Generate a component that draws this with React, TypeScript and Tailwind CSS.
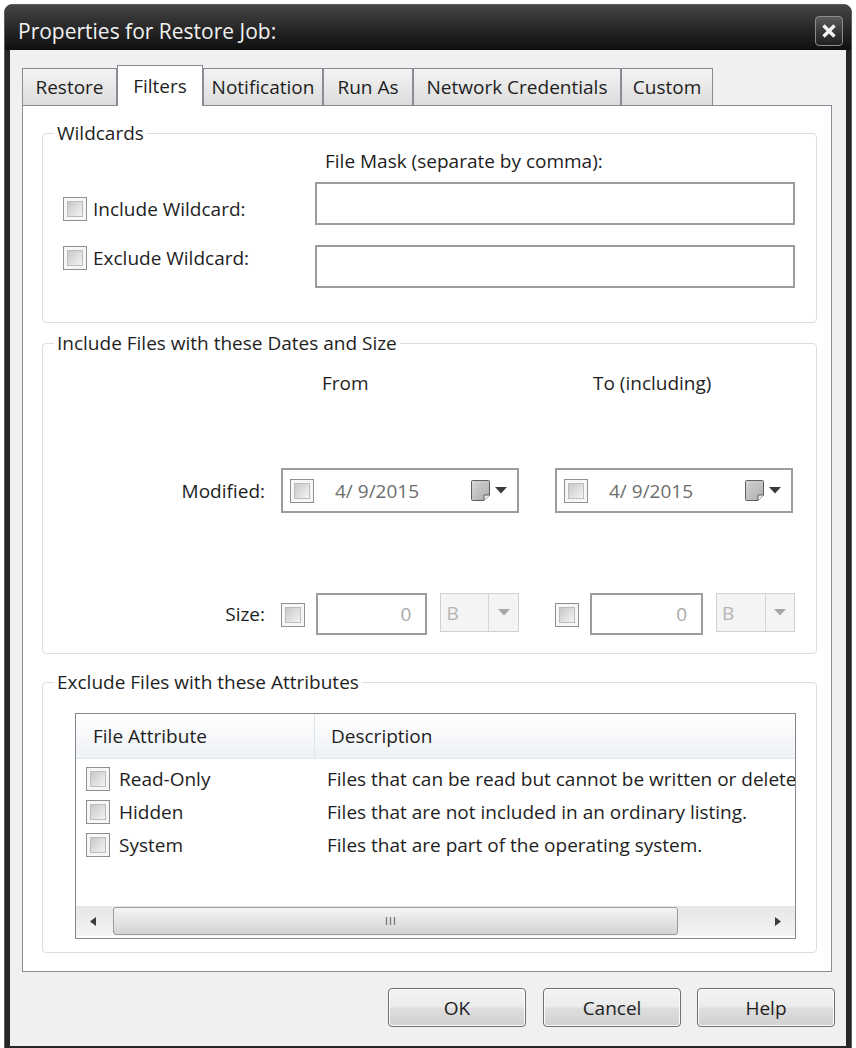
import { FC, ReactNode } from 'react';

const tabs = [
  { label: 'Restore', width: 'w-[95px]' },
  { label: 'Filters', width: 'w-[86px]', active: true },
  { label: 'Notification', width: 'w-[120px]' },
  { label: 'Run As', width: 'w-[90px]' },
  { label: 'Network Credentials', width: 'w-[208px]' },
  { label: 'Custom', width: 'w-[92px]' },
];

const attributes = [
  {
    name: 'Read-Only',
    description: 'Files that can be read but cannot be written or deleted.',
  },
  {
    name: 'Hidden',
    description: 'Files that are not included in an ordinary listing.',
  },
  {
    name: 'System',
    description: 'Files that are part of the operating system.',
  },
];

const CheckBox: FC<{ className?: string }> = ({ className = '' }) => (
  <div
    className={`w-[24px] h-[24px] shrink-0 border border-[#8f8f8f] bg-[#f7f7f7] p-[3px] ${className}`}
  >
    <div className="w-full h-full border border-[#bcbcbc] bg-linear-to-br from-[#c8c8c8] to-[#f4f4f4]" />
  </div>
);

interface GroupBoxProps {
  title: string;
  className?: string;
  innerClassName?: string;
  children: ReactNode;
}

const GroupBox: FC<GroupBoxProps> = ({
  title,
  className = '',
  innerClassName = '',
  children,
}) => (
  <fieldset
    className={`ml-[19px] mr-[14px] min-w-0 border border-[#d5dfe5] rounded-[4px] ${className}`}
  >
    <legend className="ml-[11px] px-[3px] leading-[24px]">{title}</legend>
    <div className={innerClassName}>{children}</div>
  </fieldset>
);

const CalendarIcon = () => (
  <svg width="21" height="23" viewBox="0 0 21 23">
    <defs>
      <linearGradient id="cal" x1="0" y1="0" x2="1" y2="1">
        <stop offset="0" stopColor="#d9d9d9" />
        <stop offset="1" stopColor="#a9a9a9" />
      </linearGradient>
    </defs>
    <path
      d="M1.5 2.5 Q1.5 1.5 2.5 1.5 H18.5 Q19.5 1.5 19.5 2.5 V16 L14 21.5 H2.5 Q1.5 21.5 1.5 20.5 Z"
      fill="url(#cal)"
      stroke="#5f5f5f"
    />
    <path d="M5 6 H16 M5 10 H16 M5 14 H13 M8.5 4 V18 M12.5 4 V18" stroke="#bdbdbd" strokeWidth="0.8" />
    <path d="M14 21.5 V16 H19.5" fill="#eeeeee" stroke="#5f5f5f" />
  </svg>
);

const DownArrow: FC<{ color?: string }> = ({ color = '#3a3a3a' }) => (
  <svg width="12" height="7" viewBox="0 0 12 7">
    <path d="M0 0 H12 L6 6.5 Z" fill={color} />
  </svg>
);

const DatePicker: FC<{ className?: string }> = ({ className = '' }) => (
  <div
    className={`w-[238px] h-[45px] border-2 border-[#9c9c9c] bg-white flex items-center pl-[7px] pr-[10px] ${className}`}
  >
    <CheckBox />
    <span className="ml-[21px] text-[#6d6d6d] whitespace-pre">4/ 9/2015</span>
    <div className="ml-auto flex items-center gap-[4px]">
      <CalendarIcon />
      <DownArrow />
    </div>
  </div>
);

const SizeField: FC<{ inputWidth: string; leftWidth: string }> = ({
  inputWidth,
  leftWidth,
}) => (
  <div className="flex items-start">
    <CheckBox className="mt-[10px]" />
    <div
      className={`${inputWidth} ml-[11px] h-[42px] border-2 border-[#9c9c9c] bg-white flex items-center justify-end pr-[14px] text-[#a9a9a9]`}
    >
      0
    </div>
    <div className="ml-[13px] w-[79px] h-[39px] border border-[#d0d0d0] bg-[#f4f4f4] flex">
      <div className={`${leftWidth} flex items-center pl-[5px] text-[#b5b5b5]`}>B</div>
      <div className="flex-1 border-l border-[#d6d6d6] flex items-center justify-center">
        <DownArrow color="#a6a6a6" />
      </div>
    </div>
  </div>
);

const ScrollBar = () => (
  <div className="h-[30px] mb-[2px] shrink-0 flex bg-linear-to-b from-[#e7e7e7] to-[#f3f3f3]">
    <div className="w-[34px] flex items-center justify-center">
      <svg width="6" height="9" viewBox="0 0 6 9">
        <path d="M6 0 V9 L0 4.5 Z" fill="#3a3a3a" />
      </svg>
    </div>
    <div className="flex-1 pl-[3px] py-[1px]">
      <div className="w-[565px] h-full rounded-[3px] border border-[#9b9b9b] bg-linear-to-b from-[#f5f5f5] to-[#d3d3d3] flex items-center justify-center">
        <svg width="11" height="10" viewBox="0 0 11 10" className="-ml-[10px]">
          <path d="M1.5 1 V9 M5.5 1 V9 M9.5 1 V9" stroke="#7a7a7a" strokeWidth="1.3" />
        </svg>
      </div>
    </div>
    <div className="w-[35px] flex items-center justify-center">
      <svg width="6" height="9" viewBox="0 0 6 9">
        <path d="M0 0 V9 L6 4.5 Z" fill="#3a3a3a" />
      </svg>
    </div>
  </div>
);

const AttributeList = () => (
  <div className="mt-[19px] h-[226px] border border-[#828790] bg-white flex flex-col overflow-hidden">
    <div className="h-[45px] shrink-0 flex border-b border-[#e2e5ea] bg-linear-to-b from-white to-[#eef1f5]">
      <div className="w-[239px] shrink-0 flex items-center pl-[17px] border-r border-[#e0e3e8]">
        File Attribute
      </div>
      <div className="flex items-center pl-[16px]">Description</div>
    </div>
    <div className="pt-[3px]">
      {attributes.map((attr) => (
        <div
          key={attr.name}
          className="h-[33px] flex items-center whitespace-nowrap overflow-hidden"
        >
          <div className="w-[239px] shrink-0 flex items-center pl-[10px] gap-[9px]">
            <CheckBox />
            {attr.name}
          </div>
          <div className="pl-[12px]">{attr.description}</div>
        </div>
      ))}
    </div>
    <div className="flex-1" />
    <ScrollBar />
  </div>
);

const WinButton: FC<{ label: string }> = ({ label }) => (
  <button className="w-[138px] h-[39px] rounded-[4px] border border-[#707070] bg-[linear-gradient(to_bottom,#f4f4f4_0%,#ebebeb_48%,#dedede_52%,#d0d0d0_100%)] shadow-[inset_0_0_0_1px_#fbfbfb] flex items-center justify-center">
    {label}
  </button>
);

const App = () => {
  return (
    <div className="w-[856px] h-[1048px] bg-white pt-[4px] pl-[4px] font-['Open_Sans',sans-serif] text-[19px] leading-[24px] text-[#1e1e1e] overflow-hidden">
      <div className="w-[848px] h-[1048px] rounded-t-[8px] border border-[#5c5c5c] bg-[#262626] flex flex-col">
        {/* title bar */}
        <div className="h-[45px] shrink-0 rounded-t-[7px] bg-linear-to-b from-[#454545] to-[#0f0f0f] flex items-center justify-between pl-[13px] pr-[8px] pt-[6px]">
          <span className="text-[21px] leading-[28px] text-[#f1f1f1]">
            Properties for Restore Job:
          </span>
          <div className="w-[28px] h-[30px] rounded-[4px] border border-[#8c8c8c] bg-linear-to-b from-[#5a5a5a] to-[#202020] flex items-center justify-center">
            <svg width="16" height="16" viewBox="0 0 16 16">
              <path d="M2.5 2.5 L13.5 13.5 M13.5 2.5 L2.5 13.5" stroke="#f4f4f4" strokeWidth="3.4" />
            </svg>
          </div>
        </div>

        {/* body */}
        <div className="mx-[5px] mb-[5px] flex-1 bg-[#f0f0f0] pl-[12px] pr-[14px] pt-[15px] flex flex-col">
          <div className="h-[40px] shrink-0 flex items-end">
            {tabs.map((tab) =>
              tab.active ? (
                <div
                  key={tab.label}
                  className={`${tab.width} h-[41px] -mb-px relative z-10 border border-b-0 border-[#898c95] bg-white flex items-center justify-center`}
                >
                  {tab.label}
                </div>
              ) : (
                <div
                  key={tab.label}
                  className={`${tab.width} h-[37px] border border-b-0 border-[#898c95] bg-linear-to-b from-[#f4f4f4] to-[#dcdcdc] flex items-center justify-center`}
                >
                  {tab.label}
                </div>
              )
            )}
          </div>

          <div className="bg-white border border-[#898c95] pt-[15px] pb-[18px] flex flex-col">
            <GroupBox title="Wildcards" innerClassName="pl-[20px] pr-[21px] pb-[34px]">
              <div className="mt-[4px] pl-[262px]">File Mask (separate by comma):</div>
              <div className="mt-[9px] flex">
                <div className="w-[252px] shrink-0 flex flex-col pt-[15px] gap-[25px]">
                  <label className="flex items-center gap-[6px]">
                    <CheckBox />
                    Include Wildcard:
                  </label>
                  <label className="flex items-center gap-[6px]">
                    <CheckBox />
                    Exclude Wildcard:
                  </label>
                </div>
                <div className="flex-1 flex flex-col gap-[20px]">
                  <div className="h-[43px] border-2 border-[#9c9c9c] bg-white" />
                  <div className="h-[43px] border-2 border-[#9c9c9c] bg-white" />
                </div>
              </div>
            </GroupBox>

            <GroupBox
              title="Include Files with these Dates and Size"
              className="mt-[8px]"
              innerClassName="pl-[20px] pr-[21px] pb-[18px]"
            >
              <div className="mt-[16px] flex">
                <div className="w-[238px] ml-[218px] pl-[41px]">From</div>
                <div className="w-[240px] ml-[36px] pl-[38px]">To (including)</div>
              </div>
              <div className="mt-[73px] flex items-center">
                <div className="w-[202px] text-right">Modified:</div>
                <DatePicker className="ml-[16px]" />
                <DatePicker className="ml-[36px]" />
              </div>
              <div className="mt-[80px] flex items-start">
                <div className="w-[202px] mt-[9px] text-right">Size:</div>
                <div className="w-[238px] ml-[16px]">
                  <SizeField inputWidth="w-[112px]" leftWidth="w-[47px]" />
                </div>
                <div className="ml-[36px]">
                  <SizeField inputWidth="w-[113px]" leftWidth="w-[48px]" />
                </div>
              </div>
            </GroupBox>

            <GroupBox
              title="Exclude Files with these Attributes"
              className="mt-[16px]"
              innerClassName="pl-[32px] pr-[20px] pb-[13px]"
            >
              <AttributeList />
            </GroupBox>
          </div>

          <div className="mt-[16px] -mr-[3px] flex justify-end">
            <WinButton label="OK" />
            <div className="ml-[17px]">
              <WinButton label="Cancel" />
            </div>
            <div className="ml-[16px]">
              <WinButton label="Help" />
            </div>
          </div>
        </div>
      </div>
    </div>
  );
};

export default App;
